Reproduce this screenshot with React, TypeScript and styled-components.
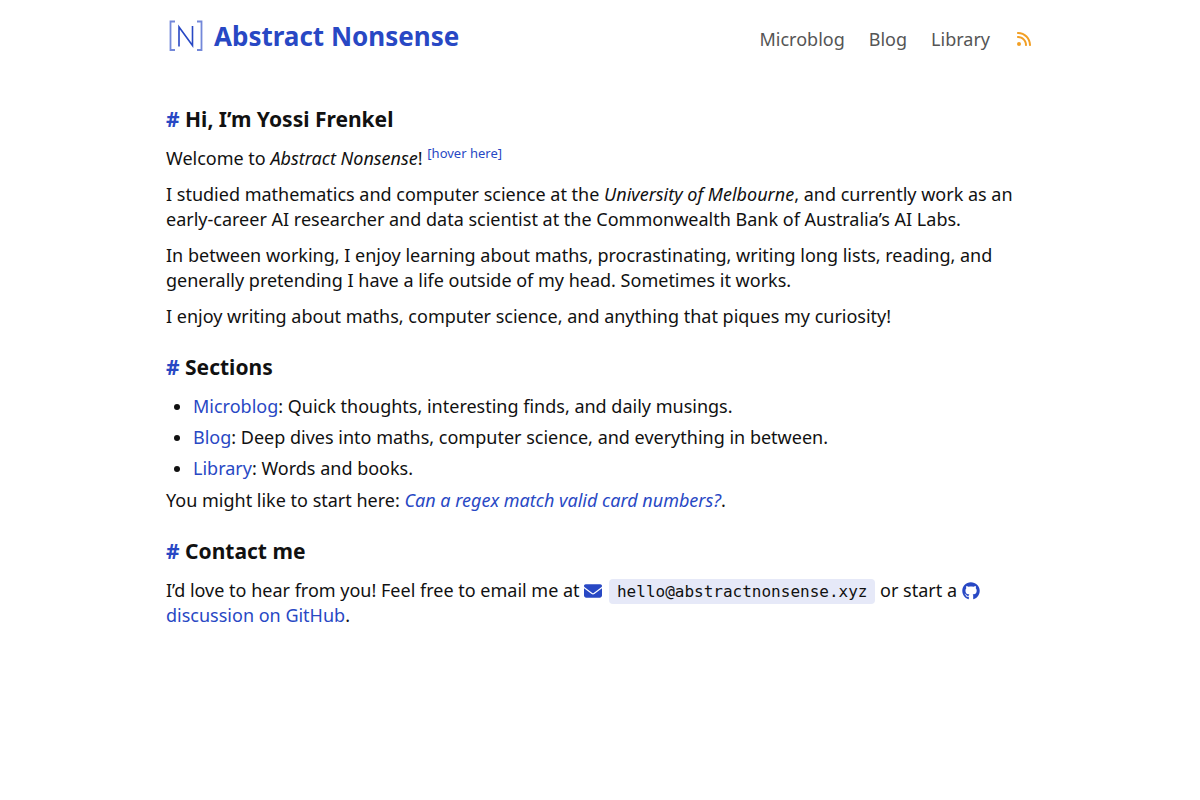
import React from "react";
import styled, { createGlobalStyle } from "styled-components";
import { FaEnvelope, FaGithub, FaRss } from "react-icons/fa6";

const Global = createGlobalStyle`
  * { box-sizing: border-box; }
  body {
    margin: 0;
    background: #fff;
    color: #111;
    font: 18px/25px "Noto Sans", sans-serif;
  }
`;

const Page = styled.div`
  max-width: 868px;
  margin: 0 auto;
`;

const Header = styled.header`
  display: flex;
  justify-content: space-between;
  align-items: center;
  height: 72px;
`;

const Brand = styled.a`
  display: flex;
  align-items: center;
  gap: 8px;
  color: #2848c4;
  font-size: 26px;
  line-height: 38px;
  font-weight: 700;
  text-decoration: none;
`;

const Mark = styled.svg`
  width: 40px;
  height: 36px;
`;

const Nav = styled.nav`
  display: flex;
  align-items: center;
  gap: 24px;
  padding-top: 6px;
`;

const NavLink = styled.a<{ $feed?: boolean }>`
  display: flex;
  padding: ${(p) => (p.$feed ? "0 2px" : "0")};
  color: ${(p) => (p.$feed ? "#f29f24" : "#555")};
  text-decoration: none;
  font-size: ${(p) => (p.$feed ? 16 : 18)}px;
`;

const Heading = styled.h2`
  margin: 0 0 13px;
  font-size: 21px;
  line-height: 28px;
  font-weight: 700;
`;

const Section = styled.section`
  padding-top: 13px;
`;

const Main = styled.main`
  padding-top: 20px;
`;

const Hash = styled.span`
  color: #2848c4;
`;

const Text = styled.p`
  margin: 0 0 11px;
`;

const Link = styled.a`
  color: #2848c4;
  text-decoration: none;
`;

const Hint = styled.sup`
  color: #2848c4;
  font-size: 13px;
  line-height: 0;
`;

const List = styled.ul`
  margin: 0 0 7px;
  padding-left: 27px;
`;

const Item = styled.li`
  margin-bottom: 6px;
`;

const Code = styled.code`
  margin-left: 2px;
  padding: 3px 8px;
  border-radius: 4px;
  background: #e6e9f8;
  color: #111;
  font: 16px "DejaVu Sans Mono", monospace;
`;

const InlineIcon = styled.span`
  color: #2848c4;
  svg { vertical-align: -3px; }
`;

function Title({ children }: { children: React.ReactNode }) {
  return <Heading><Hash>#</Hash> {children}</Heading>;
}

export default function App() {
  return (
    <Page>
      <Global />
      <Header>
        <Brand href="#">
          <Mark viewBox="0 0 40 36" fill="none" stroke="#2848c4" aria-hidden="true">
            <path d="M9 3.500H4.500v28.500H9M31 3.500h4.500v28.500H31" strokeWidth="1.800" opacity="0.65" />
            <path d="M13 28.500V9l13.500 18.500V8" strokeWidth="1.600" />
          </Mark>
          Abstract Nonsense
        </Brand>
        <Nav>
          <NavLink href="#microblog">Microblog</NavLink>
          <NavLink href="#blog">Blog</NavLink>
          <NavLink href="#library">Library</NavLink>
          <NavLink href="#feed" $feed aria-label="RSS feed"><FaRss /></NavLink>
        </Nav>
      </Header>
      <Main>
        <Section>
          <Title>Hi, I’m Yossi Frenkel</Title>
          <Text>Welcome to <em>Abstract Nonsense</em>! <Hint>[hover here]</Hint></Text>
          <Text>I studied mathematics and computer science at the <em>University of Melbourne</em>, and currently work as an early-career AI researcher and data scientist at the Commonwealth Bank of Australia’s AI Labs.</Text>
          <Text>In between working, I enjoy learning about maths, procrastinating, writing long lists, reading, and generally pretending I have a life outside of my head. Sometimes it works.</Text>
          <Text>I enjoy writing about maths, computer science, and anything that piques my curiosity!</Text>
        </Section>
        <Section>
          <Title>Sections</Title>
          <List>
            <Item><Link href="#microblog">Microblog</Link>: Quick thoughts, interesting finds, and daily musings.</Item>
            <Item><Link href="#blog">Blog</Link>: Deep dives into maths, computer science, and everything in between.</Item>
            <Item><Link href="#library">Library</Link>: Words and books.</Item>
          </List>
          <Text>You might like to start here: <Link href="#regex"><em>Can a regex match valid card numbers?</em></Link>.</Text>
        </Section>
        <Section>
          <Title>Contact me</Title>
          <Text>
            I’d love to hear from you! Feel free to email me at <InlineIcon><FaEnvelope /></InlineIcon> <Code>hello@abstractnonsense.xyz</Code> or start a <Link href="#github"><InlineIcon><FaGithub /></InlineIcon> discussion on GitHub</Link>.
          </Text>
        </Section>
      </Main>
    </Page>
  );
}
